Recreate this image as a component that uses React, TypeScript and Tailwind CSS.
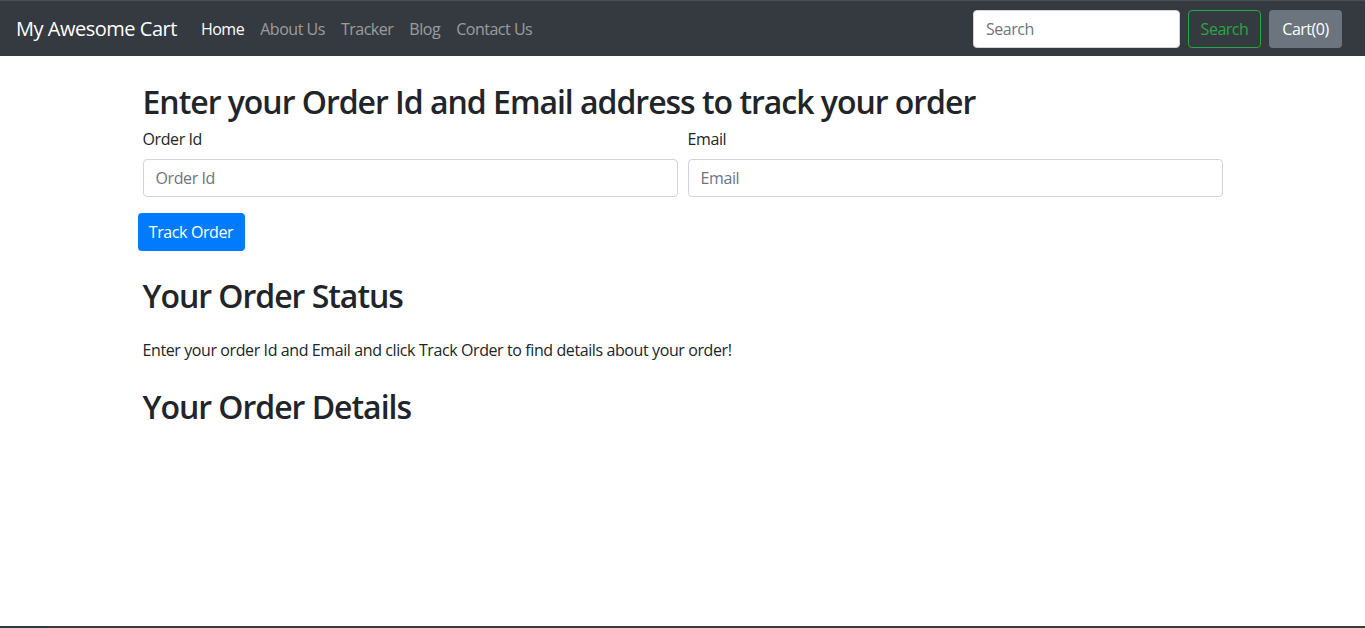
const font = { fontFamily: '"Open Sans", "Noto Sans", sans-serif' }

const Navbar = () => {
  return (
    <nav className="h-14 bg-[#343a40] border-t border-[#4b4e52] flex flex-row items-center justify-between pl-4 pr-[23px] tracking-[-0.03em]">
      <div className="flex flex-row items-center">
        <span className="text-[20px] text-white mr-4 leading-[30px]">My Awesome Cart</span>
        <ul className="flex flex-row text-[16px] leading-6">
          <li className="px-2 text-white">Home</li>
          <li className="px-2 text-[#ffffff80]">About Us</li>
          <li className="px-2 text-[#ffffff80]">Tracker</li>
          <li className="px-2 text-[#ffffff80]">Blog</li>
          <li className="px-2 text-[#ffffff80]">Contact Us</li>
        </ul>
      </div>
      <div className="flex flex-row items-center">
        <input
          className="w-[207px] h-[38px] rounded bg-white border border-[#ced4da] px-3 text-[16px] text-[#495057] placeholder:text-[#6c757d] mr-2 outline-none"
          placeholder="Search"
        />
        <button className="w-[73px] h-[38px] rounded border border-[#28a745] text-[#28a745] text-[16px] mr-2">Search</button>
        <button className="w-[73px] h-[38px] rounded bg-[#6c757d] text-white text-[16px]">Cart(0)</button>
      </div>
    </nav>
  )
}

const Field = ({ label }: { label: string }) => {
  return (
    <div className="flex-1 flex flex-col">
      <label className="text-[16px] leading-6 text-[#212529] mb-2">{label}</label>
      <input
        className="h-[38px] rounded border border-[#ced4da] px-3 text-[16px] placeholder:text-[#6c757d] outline-none"
        placeholder={label}
      />
    </div>
  )
}

export default function App() {
  return (
    <div className="min-h-screen flex flex-col bg-white text-[#212529]" style={font}>
      <Navbar />
      <main className="w-[1080px] mx-auto mt-[25px] tracking-[-0.025em]">
        <h2 className="text-[32px] leading-[38.4px] font-semibold tracking-[-0.032em] pt-[2px] mb-[6px]">Enter your Order Id and Email address to track your order</h2>
        <div className="flex flex-row gap-[10px] mb-4">
          <Field label="Order Id" />
          <Field label="Email" />
        </div>
        <button className="-ml-[5px] h-[38px] w-[107px] rounded bg-[#007bff] text-white text-[16px]">Track Order</button>
        <h2 className="text-[32px] leading-[38.4px] font-semibold tracking-[-0.032em] mt-6 pt-[2px] mb-[6px]">Your Order Status</h2>
        <p className="text-[16px] leading-6 mt-[22px] mb-4">Enter your order Id and Email and click Track Order to find details about your order!</p>
        <h2 className="text-[32px] leading-[38.4px] font-semibold tracking-[-0.032em] mt-6 pt-[2px]">Your Order Details</h2>
      </main>
      <div className="flex-1" />
      <div className="h-[2px] flex flex-row">
        <div className="w-12 bg-[#2a3a48]" />
        <div className="flex-1 bg-[#3a3a3a]" />
      </div>
    </div>
  )
}
